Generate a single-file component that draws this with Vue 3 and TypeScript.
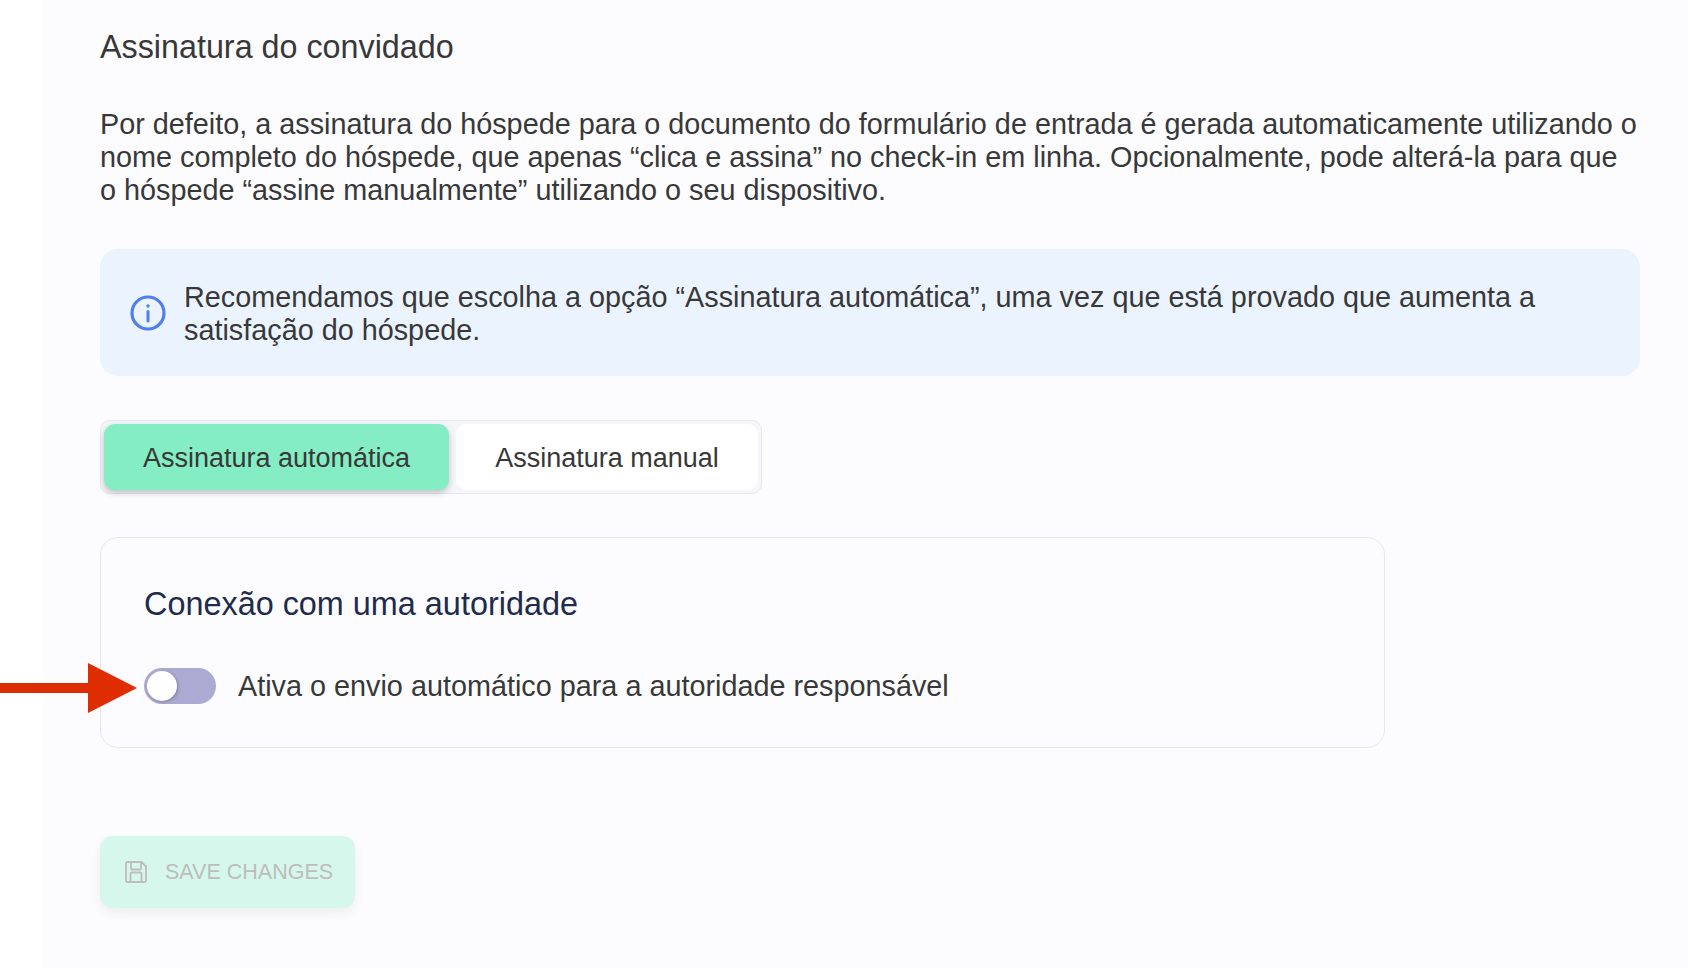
<template>
  <div class="page">
    <main class="content">
      <h1 class="title">Assinatura do convidado</h1>
      <p class="intro">
        Por defeito, a assinatura do hóspede para o documento do formulário de entrada é gerada automaticamente utilizando o nome completo do hóspede, que apenas “clica e assina” no check-in em linha. Opcionalmente, pode alterá-la para que o hóspede “assine manualmente” utilizando o seu dispositivo.
      </p>

      <div class="notice">
        <svg class="notice-icon" viewBox="0 0 36 36" fill="none" stroke="#4f7fee">
          <circle cx="18" cy="18" r="16" stroke-width="3.200" />
          <path d="M18 16.500v9.500" stroke-width="3" stroke-linecap="round" />
          <circle cx="18" cy="11" r="1.700" fill="#4f7fee" stroke="none" />
        </svg>
        <span>Recomendamos que escolha a opção “Assinatura automática”, uma vez que está provado que aumenta a satisfação do hóspede.</span>
      </div>

      <div class="tabs">
        <button
          v-for="tab in tabs"
          :key="tab"
          type="button"
          class="tab"
          :class="{ active: tab === activeTab }"
          @click="activeTab = tab"
        >
          {{ tab }}
        </button>
      </div>

      <section class="card">
        <h2 class="card-title">Conexão com uma autoridade</h2>
        <div class="toggle-row">
          <span class="toggle"><span class="knob"></span></span>
          <span>Ativa o envio automático para a autoridade responsável</span>
        </div>
      </section>

      <button type="button" class="save" disabled>
        <svg class="save-icon" viewBox="0 0 22 22" fill="none" stroke="#bdbdbd" stroke-width="1.800">
          <path d="M2.500 1h14l4.500 4.500v14a1.500 1.500 0 0 1-1.500 1.500h-17A1.500 1.500 0 0 1 1 19.500v-17A1.500 1.500 0 0 1 2.500 1z" stroke-linejoin="round" />
          <path d="M6 1v6.500a1 1 0 0 0 1 1h8a1 1 0 0 0 1-1V1" />
          <path d="M5.500 21v-8.500a1 1 0 0 1 1-1h9a1 1 0 0 1 1 1V21" />
        </svg>
        SAVE CHANGES
      </button>
    </main>

    <svg class="arrow" viewBox="0 0 138 50">
      <path d="M0 20h88V0l49 25-49 25V30H0z" fill="#de2d00" />
    </svg>
  </div>
</template>

<script setup lang="ts">
import { ref } from 'vue'

const tabs = ['Assinatura automática', 'Assinatura manual']
const activeTab = ref(tabs[0])
</script>

<style>
body {
  background: #ffffff;
}
</style>

<style scoped>
.page {
  position: relative;
  height: 968px;
  overflow: hidden;
  padding-left: 43px;
  font-family: "Liberation Sans", Arial, sans-serif;
  color: #383838;
  box-sizing: border-box;
}

.content {
  height: 100%;
  box-sizing: border-box;
  padding: 28px 48px 0 57px;
  background: #fcfcff;
}

.title {
  margin: 0;
  font-size: 32.3px;
  font-weight: 400;
  line-height: 38px;
}

.intro {
  margin: 42px 0 0;
  font-size: 28.8px;
  line-height: 33px;
}

.notice {
  display: flex;
  align-items: center;
  gap: 18px;
  height: 127px;
  margin-top: 42px;
  padding: 0 30px;
  box-sizing: border-box;
  background: #ebf3fe;
  border-radius: 18px;
  font-size: 28.8px;
  line-height: 33px;
}

.notice span {
  padding-top: 2px;
}

.notice-icon {
  flex: none;
  width: 36px;
  height: 36px;
}

.tabs {
  display: flex;
  gap: 7px;
  width: 662px;
  height: 74px;
  margin-top: 44px;
  padding: 3px;
  box-sizing: border-box;
  background: #f5f6f9;
  border: 1px solid #e8e9f0;
  border-radius: 10px;
}

.tab {
  border: 0;
  border-radius: 11px;
  background: #ffffff;
  color: #383838;
  font: inherit;
  font-size: 27px;
  flex: none;
  width: 302px;
  padding: 2px 0 0;
}

.tab.active {
  width: 345px;
  background: #85edc4;
  box-shadow: 0 3px 6px rgba(0, 0, 0, 0.22);
}

.card {
  width: 1285px;
  height: 211px;
  margin-top: 43px;
  padding: 47px 43px 0;
  box-sizing: border-box;
  border: 1px solid #e6e6ee;
  border-radius: 18px;
}

.card-title {
  margin: 0;
  font-size: 32.4px;
  font-weight: 400;
  line-height: 38px;
  color: #1f2b4a;
}

.toggle-row {
  display: flex;
  align-items: center;
  gap: 22px;
  margin-top: 45px;
  font-size: 28.8px;
}

.toggle {
  display: block;
  width: 72px;
  height: 36px;
  padding: 3px;
  box-sizing: border-box;
  background: #aaaad2;
  border-radius: 18px;
}

.knob {
  display: block;
  width: 30px;
  height: 30px;
  background: #ffffff;
  border-radius: 50%;
  box-shadow: 1px 1px 3px rgba(0, 0, 0, 0.25);
}

.save {
  display: flex;
  align-items: center;
  gap: 18px;
  width: 255px;
  height: 72px;
  margin-top: 88px;
  padding: 0 0 0 25px;
  box-sizing: border-box;
  border: 0;
  border-radius: 12px;
  background: #d6f7ec;
  color: #bdbdbd;
  font: inherit;
  font-size: 21.5px;
  box-shadow: 0 5px 12px rgba(0, 0, 0, 0.06);
}

.save-icon {
  flex: none;
  width: 22px;
  height: 22px;
}

.arrow {
  position: absolute;
  left: 0;
  top: 663px;
  width: 138px;
  height: 50px;
}
</style>
